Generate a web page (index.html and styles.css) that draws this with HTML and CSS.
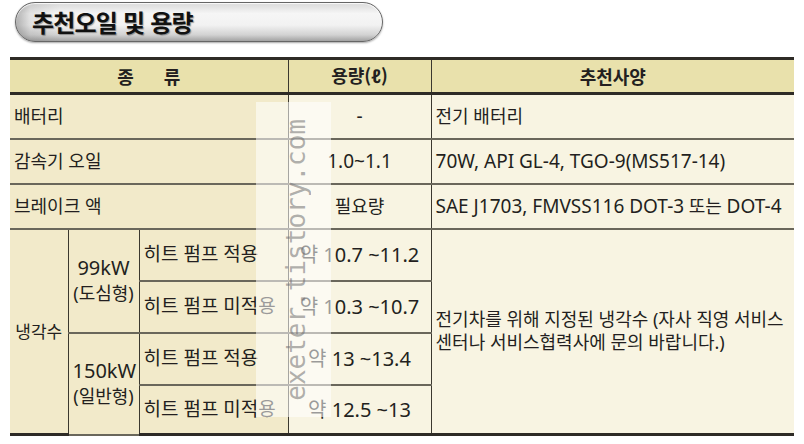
FILE: index.html
```html
<!DOCTYPE html>
<html lang="ko">
<head>
<meta charset="utf-8">
<title>추천오일 및 용량</title>
<link rel="stylesheet" href="styles.css">
</head>
<body>
<div class="page">
  <div class="title-pill"><h1 class="title">추천오일 및 용량</h1></div>
  <div class="table-wrap">
    <table class="spec">
      <colgroup>
        <col class="c1"><col class="c2"><col class="c3"><col class="c4"><col class="c5">
      </colgroup>
      <thead>
        <tr>
          <th colspan="3"><span class="kind-head">종</span><span class="kind-head">류</span></th>
          <th>용량(<span class="lat">ℓ</span>)</th>
          <th>추천사양</th>
        </tr>
      </thead>
      <tbody>
        <tr class="row">
          <td colspan="3" class="k left">배터리</td>
          <td class="v center"><span class="lat">-</span></td>
          <td class="v left">전기 배터리</td>
        </tr>
        <tr class="row">
          <td colspan="3" class="k left">감속기 오일</td>
          <td class="v center"><span class="lat">1.0~1.1</span></td>
          <td class="v left"><span class="lat">70W, API GL-4, TGO-9(MS517-14)</span></td>
        </tr>
        <tr class="row">
          <td colspan="3" class="k left">브레이크 액</td>
          <td class="v center">필요량</td>
          <td class="v left"><span class="lat">SAE J1703, FMVSS116 DOT-3</span> 또는 <span class="lat">DOT-4</span></td>
        </tr>
        <tr class="sub">
          <td rowspan="4" class="k center coolant">냉각수</td>
          <td rowspan="2" class="k center stack"><span class="big">99kW</span><br>(도심형)</td>
          <td class="k left heat">히트 펌프 적용</td>
          <td class="v center num">약 10.7 ~11.2</td>
          <td rowspan="4" class="v left note">전기차를 위해 지정된 냉각수 (자사 직영 서비스<br>센터나 서비스협력사에 문의 바랍니다.)</td>
        </tr>
        <tr class="sub">
          <td class="k left heat">히트 펌프 미적용</td>
          <td class="v center num">약 10.3 ~10.7</td>
        </tr>
        <tr class="sub">
          <td rowspan="2" class="k center stack"><span class="big">150kW</span><br>(일반형)</td>
          <td class="k left heat">히트 펌프 적용</td>
          <td class="v center num">약 13 ~13.4</td>
        </tr>
        <tr class="sub last">
          <td class="k left heat">히트 펌프 미적용</td>
          <td class="v center num">약 12.5 ~13</td>
        </tr>
      </tbody>
    </table>
    <div class="watermark"><span class="wm-text">exeter.tistory.com</span></div>
  </div>
</div>
</body>
</html>
```

FILE: styles.css
```css
html, body {
  margin: 0;
  padding: 0;
  background: #ffffff;
}

body {
  font-family: "Noto Sans", "Noto Sans CJK KR", sans-serif;
  color: #231f20;
}

.page {
  padding-top: 2px;
}

.title-pill {
  margin-left: 15px;
  width: 368px;
  height: 40px;
  box-sizing: border-box;
  border: 1px solid #666666;
  border-radius: 20px;
  background:
    linear-gradient(to right, rgba(0, 0, 0, 0.28) 0, rgba(0, 0, 0, 0.08) 14px, rgba(0, 0, 0, 0) 44px),
    linear-gradient(to bottom, #d9d9d9 0%, #f6f6f6 28%, #f2f2f2 58%, #d2d2d2 84%, #a2a2a2 100%);
  box-shadow: 0 1px 2px rgba(0, 0, 0, 0.35), inset 0 1px 1px rgba(255, 255, 255, 0.9);
  display: flex;
  align-items: center;
  padding-left: 16px;
}

.title {
  margin: 0;
  font-family: "Noto Sans CJK KR", sans-serif;
  font-size: 24px;
  font-weight: 700;
  letter-spacing: -0.8px;
  line-height: 1;
  color: #111111;
  text-shadow: 1px 1px 1px rgba(0, 0, 0, 0.35);
}

.table-wrap {
  position: relative;
  margin: 15px 0 0 10px;
  width: 784px;
}

.spec {
  width: 784px;
  table-layout: fixed;
  border-collapse: collapse;
  font-size: 18px;
  line-height: 23px;
}

.c1 { width: 58px; }
.c2 { width: 71px; }
.c3 { width: 149px; }
.c4 { width: 143px; }
.c5 { width: 363px; }

.spec th {
  height: 32px;
  padding: 0;
  background: #e9e1ac;
  font-family: "Noto Sans CJK KR", sans-serif;
  font-size: 18px;
  font-weight: 700;
  text-align: center;
  border-top: 3px solid #2e2b26;
  border-bottom: 3px solid #2e2b26;
  border-left: 1px solid #3b382f;
  border-right: 1px solid #3b382f;
}

.spec th:first-child { border-left: none; }
.spec th:last-child { border-right: none; }

.kind-head {
  display: inline-block;
  margin: 0 15px;
}

.spec td {
  padding: 0 4px;
  border-left: 1px solid #3b382f;
  border-right: 1px solid #3b382f;
  border-top: 2px solid #6a675b;
  border-bottom: 2px solid #6a675b;
  vertical-align: middle;
}

.spec tr > td:first-child { border-left: none; }
.spec tr.row td:last-child,
.spec td.note { border-right: none; }

.spec tr.last td,
.spec td.note,
.spec td[rowspan="4"] { border-bottom: 3px solid #2e2b26; }

.spec tr.row { height: 45px; }
.spec tr.sub { height: 52px; }
.spec tr.sub.last { height: 50px; }

.k { background: #f2eaca; }
.v { background: #f8f4e2; }

.left { text-align: left; }
.center { text-align: center; }

.lat {
  font-family: "Noto Sans", sans-serif;
  font-size: 19px;
}

.coolant {
  padding: 0;
  font-size: 17px;
  white-space: nowrap;
}

.heat {
  font-size: 19px;
  padding-left: 4px;
  white-space: nowrap;
}

.stack {
  font-size: 18px;
  line-height: 25px;
  padding: 0;
  white-space: nowrap;
}

.big {
  font-family: "Noto Sans", sans-serif;
  font-size: 20px;
}

.num {
  font-size: 20px;
  white-space: nowrap;
}

.note {
  font-size: 18px;
  line-height: 23px;
}

.watermark {
  position: absolute;
  left: 246px;
  top: 45px;
  width: 75px;
  height: 315px;
  background: rgba(255, 255, 255, 0.55);
  display: flex;
  align-items: center;
  justify-content: center;
}

.wm-text {
  writing-mode: vertical-rl;
  transform: rotate(180deg);
  font-family: "DejaVu Sans Mono", monospace;
  font-size: 26px;
  line-height: 1;
  color: rgba(110, 110, 110, 0.55);
  margin-left: 4px;
}
```
